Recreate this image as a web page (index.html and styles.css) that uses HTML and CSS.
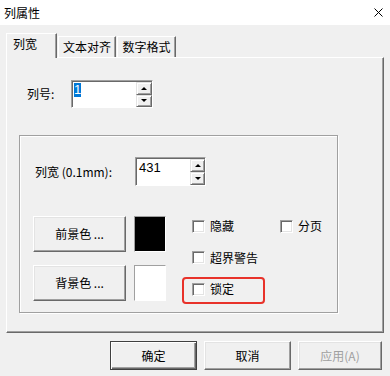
FILE: index.html
```html
<!DOCTYPE html>
<html lang="zh">
<head>
<meta charset="utf-8">
<title>列属性</title>
<link rel="stylesheet" href="styles.css">
</head>
<body>
<div class="titlebar">
  <span class="title">列属性</span>
  <svg class="close" viewBox="0 0 9 9" width="9" height="9"><path d="M0.5 0.5 L8.5 8.5 M8.5 0.5 L0.5 8.5" stroke="#000" stroke-width="1" fill="none"/></svg>
</div>
<div class="main">
  <div class="tabs">
    <div class="tab active t1">列宽</div>
    <div class="tab t2">文本对齐</div>
    <div class="tab t3">数字格式</div>
  </div>
  <div class="panel">
    <div class="row-colno">
      <span class="lbl-colno">列号:</span>
      <div class="spin spin-a">
        <div class="field"><span class="sel">1</span></div>
        <div class="sbtns"><div class="sb"><span class="up"></span></div><div class="sb"><span class="down"></span></div></div>
      </div>
    </div>
    <div class="group">
      <div class="row-width">
        <span class="lbl-width">列宽 (0.1mm):</span>
        <div class="spin spin-b">
          <div class="field"><span class="val">431</span></div>
          <div class="sbtns"><div class="sb"><span class="up"></span></div><div class="sb"><span class="down"></span></div></div>
        </div>
      </div>
      <div class="lower">
        <div class="colors">
          <button class="btn cbtn">前景色 ...</button>
          <div class="swatch black"></div>
          <button class="btn cbtn">背景色 ...</button>
          <div class="swatch white"></div>
        </div>
        <div class="checks">
          <label class="chk"><span class="box"></span>隐藏</label>
          <label class="chk"><span class="box"></span>分页</label>
          <label class="chk wide"><span class="box"></span>超界警告</label>
          <label class="chk wide lock"><span class="box"></span>锁定<span class="highlight"></span></label>
        </div>
      </div>
    </div>
  </div>
  <div class="actions">
    <button class="btn act default">确定</button>
    <button class="btn act">取消</button>
    <button class="btn act apply" disabled>应用(A)</button>
  </div>
</div>
</body>
</html>
```
FILE: styles.css
```css
* { box-sizing: border-box; }
html, body { margin: 0; padding: 0; }
body {
  width: 390px;
  height: 376px;
  overflow: hidden;
  background: #f0f0f0;
  font-family: "Noto Sans CJK SC", "Noto Sans", sans-serif;
  font-size: 12px;
  color: #000;
}
.titlebar {
  height: 25px;
  background: #fff;
  display: flex;
  align-items: center;
  justify-content: space-between;
  padding: 0 7px 0 4px;
}
.title { line-height: 1; }
.close { display: block; }

.main { padding: 8px 0 0 6px; }

.tabs {
  display: flex;
  align-items: flex-end;
  height: 24px;
  position: relative;
  z-index: 1;
}
.tab {
  height: 21px;
  border-top: 1px solid #fff;
  border-left: 1px solid #fff;
  border-right: 1px solid #696969;
  box-shadow: inset -1px 0 #a0a0a0;
  display: flex;
  align-items: center;
  justify-content: center;
  line-height: 1;
  padding-bottom: 1px;
}
.tab.active {
  height: 25px;
  margin-bottom: -1px;
  background: #f0f0f0;
  justify-content: flex-start;
  padding-left: 6px;
  padding-bottom: 4px;
}
.t1 { width: 51px; }
.t2 { width: 58px; margin-left: 1px; }
.t3 { width: 59px; margin-left: 1px; }

.panel {
  width: 378px;
  height: 276px;
  border: 1px solid;
  border-color: #fff #696969 #696969 #fff;
  box-shadow: inset -1px -1px #a0a0a0;
  padding-top: 22px;
}
.row-colno {
  display: flex;
  align-items: center;
  margin-left: 20px;
}
.lbl-colno { width: 44px; line-height: 1; }

.spin {
  display: flex;
  border: 1px solid;
  border-color: #a0a0a0 #fff #fff #a0a0a0;
  box-shadow: inset 1px 1px #696969;
  background: #fff;
}
.spin-a { width: 82px; height: 28px; }
.spin-b { width: 71px; height: 29px; }
.field {
  flex: 1;
  padding: 2px 0 0 2px;
  font-family: "Liberation Sans", Arial, sans-serif;
  font-size: 13px;
  line-height: 14px;
}
.sel {
  display: inline-block;
  background: #0078d7;
  color: #fff;
  padding: 0 0 0 0;
  width: 7px;
  text-align: center;
}
.val { display: inline-block; padding-left: 1px; padding-top: 1px; }
.sbtns {
  display: flex;
  flex-direction: column;
  padding: 1px 0 0 0;
}
.spin-a .sbtns { width: 16px; }
.spin-b .sbtns { width: 15px; }
.sb {
  flex: 1;
  background: #f0f0f0;
  border: 1px solid;
  border-color: #e3e3e3 #696969 #696969 #e3e3e3;
  box-shadow: inset 1px 1px #fff, inset -1px -1px #a0a0a0;
  display: flex;
  align-items: center;
  justify-content: center;
}
.up, .down {
  width: 0; height: 0;
  border-left: 3px solid transparent;
  border-right: 3px solid transparent;
}
.up { border-bottom: 3px solid #000; }
.down { border-top: 3px solid #000; }

.group {
  width: 319px;
  height: 178px;
  margin: 27px 0 0 12px;
  border: 1px solid #a0a0a0;
  box-shadow: inset 1px 1px #fff, 1px 1px #fff;
  padding-top: 21px;
}
.row-width {
  display: flex;
  align-items: center;
  margin-left: 15px;
}
.lbl-width { width: 100px; line-height: 1; }

.lower {
  display: flex;
  margin: 30px 0 0 13px;
}
.colors {
  display: grid;
  grid-template-columns: 93px 32px;
  grid-template-rows: 36px 36px;
  column-gap: 8px;
  row-gap: 13px;
}
.btn {
  background: #f0f0f0;
  border: 1px solid;
  border-color: #fff #696969 #696969 #fff;
  box-shadow: inset -1px -1px #a0a0a0, inset 1px 1px #e3e3e3;
  font-family: "Noto Sans CJK SC", "Noto Sans", sans-serif;
  font-size: 12px;
  color: #000;
  padding: 0;
  margin: 0;
  line-height: 1;
}
.swatch {
  border: 1px solid;
  border-color: #a0a0a0 #fff #fff #a0a0a0;
}
.swatch.black { background: #000; }
.swatch.white { background: #fff; }

.checks {
  display: grid;
  grid-template-columns: 88px 60px;
  grid-auto-rows: 20px;
  row-gap: 11.5px;
  margin-left: 26px;
}
.chk {
  display: flex;
  align-items: center;
  line-height: 1;
  position: relative;
}
.chk.wide { grid-column: 1 / span 2; }
.box {
  width: 13px;
  height: 13px;
  margin-right: 5px;
  background: #fff;
  border: 1px solid;
  border-color: #a0a0a0 #fff #fff #a0a0a0;
  box-shadow: inset 1px 1px #696969, inset -1px -1px #e3e3e3;
}
.highlight {
  position: absolute;
  left: -10px;
  top: -2px;
  width: 83px;
  height: 27px;
  border: 2.5px solid #e8322a;
  border-radius: 4px;
}

.actions {
  display: flex;
  gap: 7px;
  margin: 8px 0 0 104px;
}
.act { width: 87px; height: 29px; }
.act.apply { width: 84px; color: #a0a0a0; }
.act.default {
  border-color: #404040;
  box-shadow: inset 1px 1px #fff, inset -1px -1px #696969, inset -2px -2px #a0a0a0;
}
```
